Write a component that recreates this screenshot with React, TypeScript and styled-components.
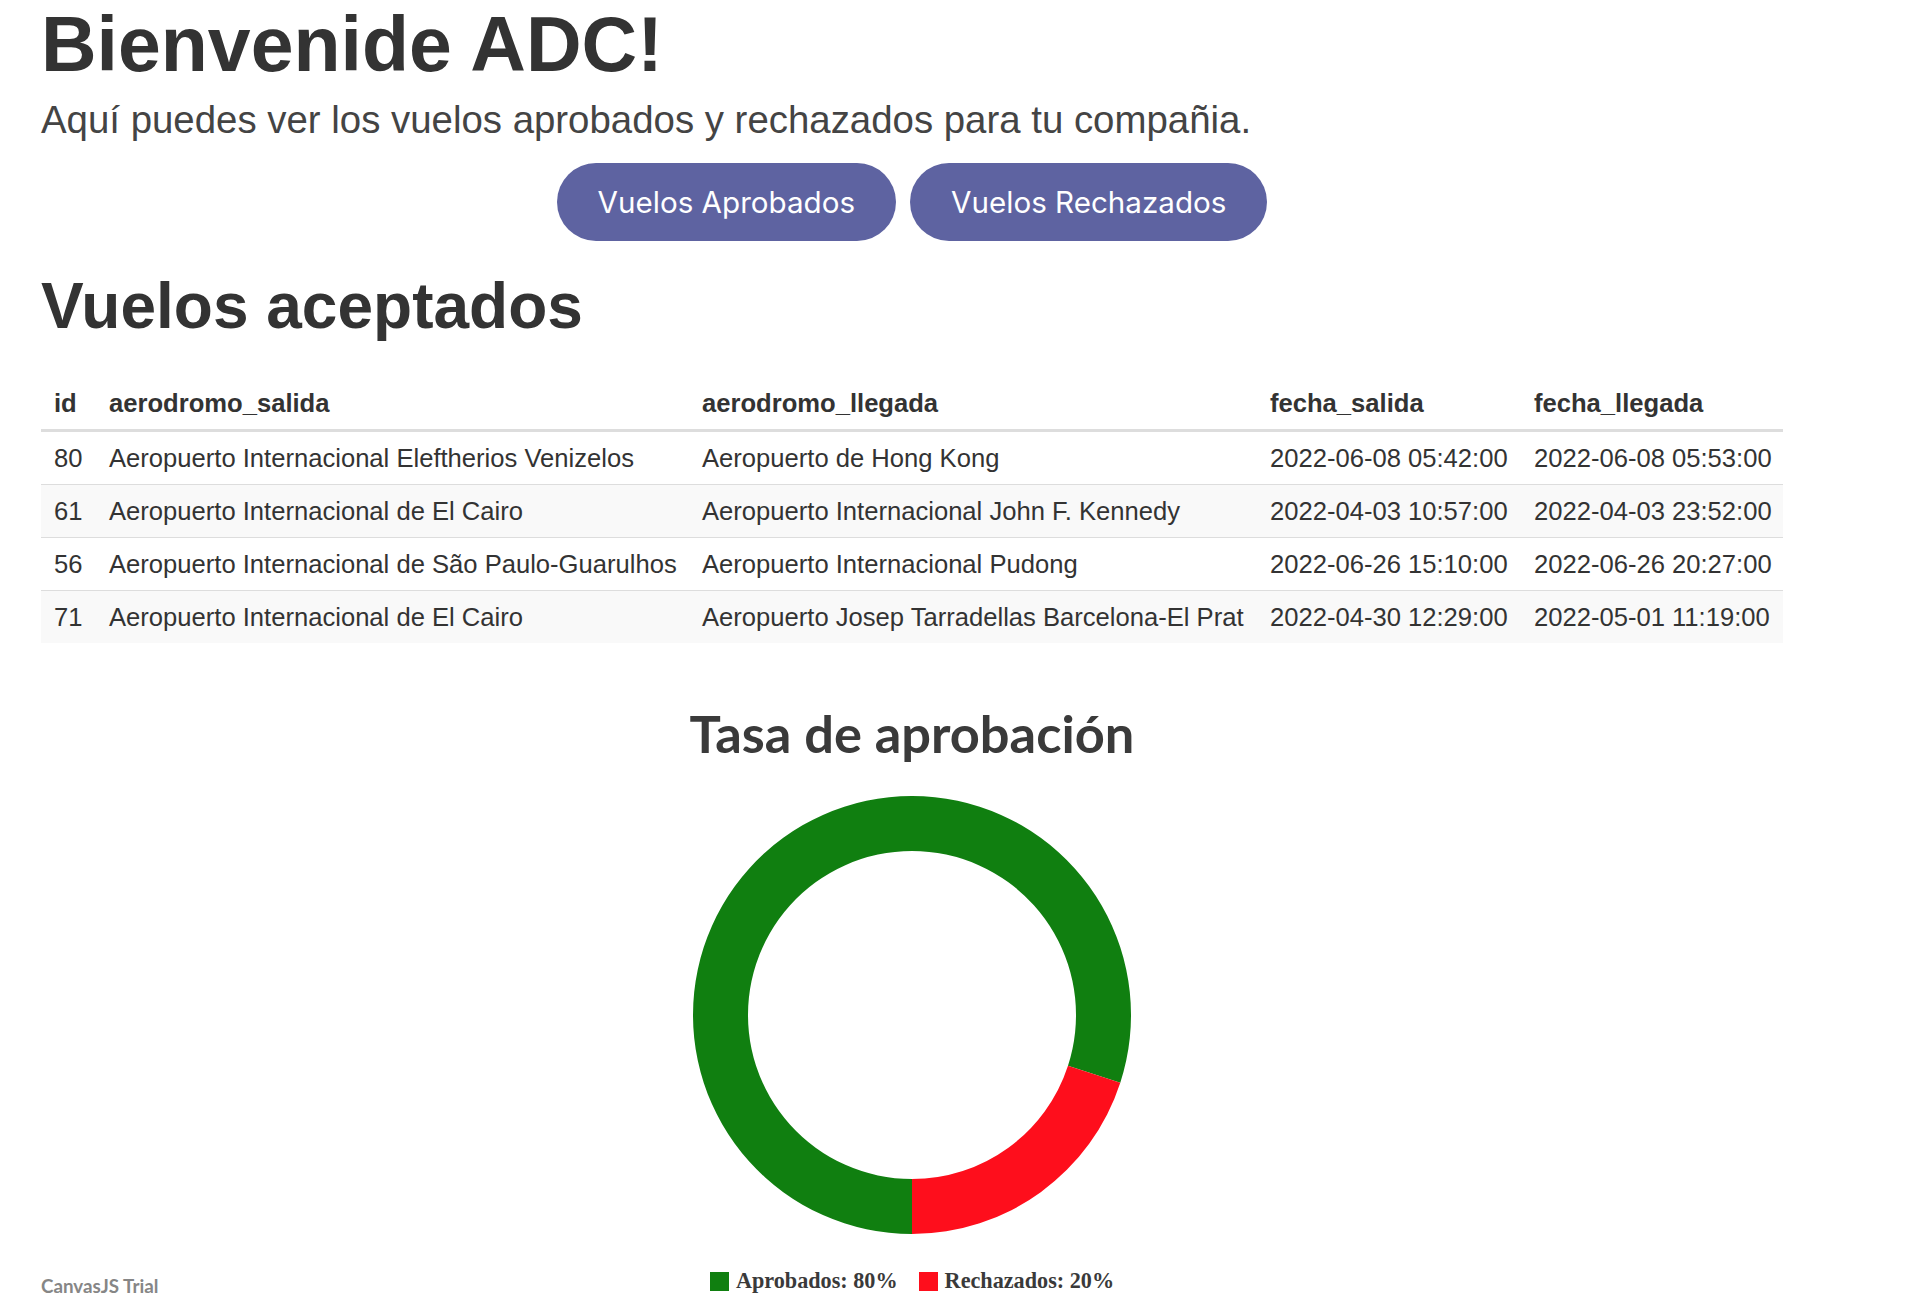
import React from "react";
import styled, { createGlobalStyle } from "styled-components";

const GlobalStyle = createGlobalStyle`
  html, body { margin: 0; padding: 0; background: #ffffff; }
  body { font-family: "Liberation Sans", Arial, Helvetica, sans-serif; color: #333333; }
  * { box-sizing: border-box; }
`;

type Flight = {
  id: number;
  salida: string;
  llegada: string;
  fechaSalida: string;
  fechaLlegada: string;
};

const flights: Flight[] = [
  { id: 80, salida: "Aeropuerto Internacional Eleftherios Venizelos", llegada: "Aeropuerto de Hong Kong", fechaSalida: "2022-06-08 05:42:00", fechaLlegada: "2022-06-08 05:53:00" },
  { id: 61, salida: "Aeropuerto Internacional de El Cairo", llegada: "Aeropuerto Internacional John F. Kennedy", fechaSalida: "2022-04-03 10:57:00", fechaLlegada: "2022-04-03 23:52:00" },
  { id: 56, salida: "Aeropuerto Internacional de São Paulo-Guarulhos", llegada: "Aeropuerto Internacional Pudong", fechaSalida: "2022-06-26 15:10:00", fechaLlegada: "2022-06-26 20:27:00" },
  { id: 71, salida: "Aeropuerto Internacional de El Cairo", llegada: "Aeropuerto Josep Tarradellas Barcelona-El Prat", fechaSalida: "2022-04-30 12:29:00", fechaLlegada: "2022-05-01 11:19:00" },
];

const columns = [
  { key: "id", label: "id", width: 55 },
  { key: "salida", label: "aerodromo_salida", width: 593 },
  { key: "llegada", label: "aerodromo_llegada", width: 568 },
  { key: "fechaSalida", label: "fecha_salida", width: 264 },
  { key: "fechaLlegada", label: "fecha_llegada", width: 262 },
];

const slices = [
  { label: "Aprobados", value: 80, color: "#107f10" },
  { label: "Rechazados", value: 20, color: "#fe0e1c" },
];

const Page = styled.main`
  width: 1742px;
  margin-left: 41px;
  display: flex;
  flex-direction: column;
`;

const Title = styled.h1`
  margin: 0;
  font-size: 77px;
  line-height: 88px;
  font-weight: 700;
  color: #333333;
`;

const Subtitle = styled.p`
  margin: 10px 0 0;
  font-size: 38.4px;
  line-height: 44px;
  font-weight: 400;
  color: #444444;
`;

const ButtonRow = styled.div`
  display: flex;
  justify-content: center;
  gap: 14px;
  margin-top: 21px;
`;

const PillButton = styled.button`
  height: 78px;
  padding: 0 41px;
  border: none;
  border-radius: 39px;
  background: #5e63a1;
  color: #ffffff;
  font-family: Inter, "Noto Sans", sans-serif;
  font-size: 29.6px;
  font-weight: 400;
  cursor: pointer;
`;

const SectionTitle = styled.h2`
  margin: 28px 0 0;
  font-size: 64px;
  line-height: 74px;
  font-weight: 700;
  color: #333333;
`;

const Table = styled.table`
  margin-top: 34px;
  width: 1742px;
  border-collapse: collapse;
  table-layout: fixed;
  font-size: 25.6px;
  color: #333333;
`;

const HeadCell = styled.th`
  text-align: left;
  padding: 12px 13px;
  line-height: 28px;
  font-weight: 700;
  border-bottom: 3px solid #dddddd;
  white-space: nowrap;
`;

const Row = styled.tr`
  &:nth-child(even) {
    background: #f9f9f9;
  }
`;

const Cell = styled.td`
  padding: 12px 13px;
  line-height: 28px;
  border-top: 1px solid #dddddd;
  white-space: nowrap;
`;

const ChartSection = styled.section`
  margin-top: 60px;
  display: flex;
  flex-direction: column;
  align-items: center;
`;

const ChartTitle = styled.h3`
  margin: 0;
  font-family: Lato, "Open Sans", sans-serif;
  font-size: 52.4px;
  line-height: 60px;
  font-weight: 700;
  color: #3a3a3a;
`;

const Donut = styled.svg`
  display: block;
  margin-top: 33px;
`;

const ChartFooter = styled.div`
  width: 100%;
  margin-top: 34px;
  display: grid;
  grid-template-columns: 1fr auto 1fr;
  align-items: start;
`;

const Credit = styled.span`
  justify-self: start;
  margin-top: 7px;
  font-family: Lato, "Open Sans", sans-serif;
  font-size: 18.8px;
  line-height: 22px;
  font-weight: 700;
  color: #868686;
`;

const Legend = styled.div`
  display: flex;
  gap: 21px;
`;

const LegendItem = styled.div`
  display: flex;
  align-items: center;
  gap: 7px;
`;

const Swatch = styled.span<{ $color: string }>`
  width: 19px;
  height: 19px;
  background: ${(p) => p.$color};
`;

const LegendText = styled.span`
  font-family: "Liberation Serif", "Times New Roman", serif;
  font-size: 22.2px;
  line-height: 26px;
  font-weight: 700;
  color: #3a3a3a;
`;

function sectorPath(cx: number, cy: number, R: number, r: number, a0: number, a1: number) {
  const rad = (d: number) => (d * Math.PI) / 180;
  const pt = (rr: number, a: number) => [cx + rr * Math.cos(rad(a)), cy + rr * Math.sin(rad(a))];
  const large = a1 - a0 > 180 ? 1 : 0;
  const [ox0, oy0] = pt(R, a0);
  const [ox1, oy1] = pt(R, a1);
  const [ix1, iy1] = pt(r, a1);
  const [ix0, iy0] = pt(r, a0);
  return `M ${ox0} ${oy0} A ${R} ${R} 0 ${large} 1 ${ox1} ${oy1} L ${ix1} ${iy1} A ${r} ${r} 0 ${large} 0 ${ix0} ${iy0} Z`;
}

function DonutChart() {
  const size = 438;
  const R = 219;
  const r = 164;
  const total = slices.reduce((s, x) => s + x.value, 0);
  let start = 90;
  return (
    <Donut width={size} height={size} viewBox={`0 0 ${size} ${size}`}>
      {slices.map((s) => {
        const sweep = (s.value / total) * 360;
        const d = sectorPath(R, R, R, r, start, start + sweep);
        start += sweep;
        return <path key={s.label} d={d} fill={s.color} />;
      })}
    </Donut>
  );
}

export default function App() {
  return (
    <>
      <GlobalStyle />
      <Page>
        <Title>Bienvenide ADC!</Title>
        <Subtitle>Aquí puedes ver los vuelos aprobados y rechazados para tu compañia.</Subtitle>
        <ButtonRow>
          <PillButton>Vuelos Aprobados</PillButton>
          <PillButton>Vuelos Rechazados</PillButton>
        </ButtonRow>
        <SectionTitle>Vuelos aceptados</SectionTitle>
        <Table>
          <colgroup>
            {columns.map((c) => (
              <col key={c.key} style={{ width: c.width }} />
            ))}
          </colgroup>
          <thead>
            <tr>
              {columns.map((c) => (
                <HeadCell key={c.key}>{c.label}</HeadCell>
              ))}
            </tr>
          </thead>
          <tbody>
            {flights.map((f) => (
              <Row key={f.id}>
                <Cell>{f.id}</Cell>
                <Cell>{f.salida}</Cell>
                <Cell>{f.llegada}</Cell>
                <Cell>{f.fechaSalida}</Cell>
                <Cell>{f.fechaLlegada}</Cell>
              </Row>
            ))}
          </tbody>
        </Table>
        <ChartSection>
          <ChartTitle>Tasa de aprobación</ChartTitle>
          <DonutChart />
          <ChartFooter>
            <Credit>CanvasJS Trial</Credit>
            <Legend>
              {slices.map((s) => (
                <LegendItem key={s.label}>
                  <Swatch $color={s.color} />
                  <LegendText>
                    {s.label}: {s.value}%
                  </LegendText>
                </LegendItem>
              ))}
            </Legend>
          </ChartFooter>
        </ChartSection>
      </Page>
    </>
  );
}
